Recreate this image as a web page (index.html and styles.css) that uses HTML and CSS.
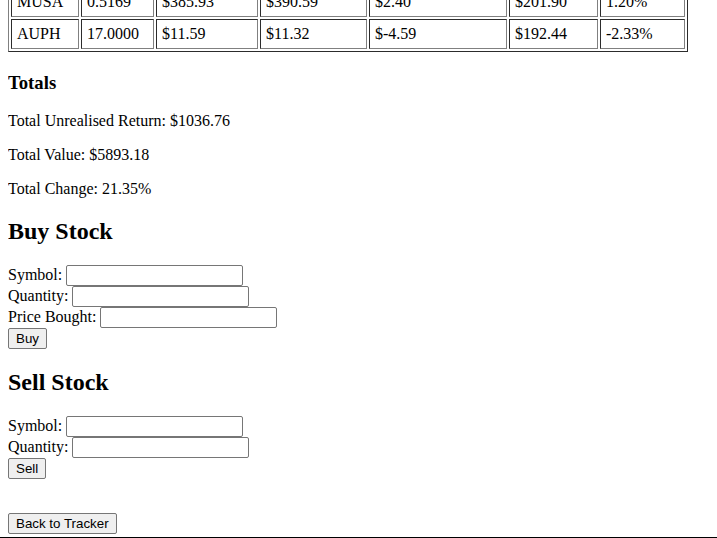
FILE: index.html
```html
<!DOCTYPE html>
<html lang="en">
<head>
<meta charset="utf-8">
<title>Portfolio - Trade</title>
<link rel="stylesheet" href="styles.css">
</head>
<body>
<table class="holdings">
  <tbody>
    <tr><td>MUSA</td><td>0.5169</td><td>$385.93</td><td>$390.59</td><td>$2.40</td><td>$201.90</td><td>1.20%</td></tr>
    <tr><td>AUPH</td><td>17.0000</td><td>$11.59</td><td>$11.32</td><td>$-4.59</td><td>$192.44</td><td>-2.33%</td></tr>
  </tbody>
</table>

<h3 class="totals-title">Totals</h3>
<p class="total">Total Unrealised Return: $1036.76</p>
<p class="total">Total Value: $5893.18</p>
<p class="total">Total Change: 21.35%</p>

<h2 class="section-title">Buy Stock</h2>
<form class="trade-form">
  <label>Symbol: <input class="field" type="text" name="symbol"></label><br>
  <label>Quantity: <input class="field" type="text" name="quantity"></label><br>
  <label>Price Bought: <input class="field" type="text" name="price"></label><br>
  <button class="btn" type="button">Buy</button>
</form>

<h2 class="section-title">Sell Stock</h2>
<form class="trade-form">
  <label>Symbol: <input class="field" type="text" name="symbol"></label><br>
  <label>Quantity: <input class="field" type="text" name="quantity"></label><br>
  <button class="btn" type="button">Sell</button>
</form>

<div class="back-row">
  <button class="btn" type="button">Back to Tracker</button>
</div>

<div class="bottom-edge"></div>
</body>
</html>
```

FILE: styles.css
```css
html {
  background: #fff;
}

body {
  margin: 0 8px 8px 8px;
  font-family: "Liberation Serif", "Times New Roman", serif;
  font-size: 16px;
  color: #000;
}

.holdings {
  margin-top: -16px;
  border: 1px outset #808080;
  border-spacing: 2px;
  border-collapse: separate;
}

.holdings td {
  box-sizing: border-box;
  border: 1px inset #808080;
  padding: 5px;
  height: 30px;
  text-align: left;
  white-space: nowrap;
}

.holdings td:nth-child(1) { width: 68px; }
.holdings td:nth-child(2) { width: 73px; }
.holdings td:nth-child(3) { width: 102px; }
.holdings td:nth-child(4) { width: 107px; }
.holdings td:nth-child(5) { width: 138px; }
.holdings td:nth-child(6) { width: 89px; }
.holdings td:nth-child(7) { width: 85px; }

.totals-title {
  font-size: 18.72px;
  margin: 19.72px 0 18.72px;
}

.total {
  margin: 16px 0;
}

.section-title {
  font-size: 24px;
  margin: 19.92px 0;
}

.trade-form {
  margin: 0;
}

.field {
  box-sizing: border-box;
  width: 177px;
  height: 21px;
  border: 1px solid #767676;
  border-radius: 2px;
  padding: 1px 2px;
  font-family: "Liberation Sans", Arial, sans-serif;
  font-size: 13.33px;
  background: #fff;
  margin: 0;
  vertical-align: baseline;
}

.btn {
  font-family: "Liberation Sans", Arial, sans-serif;
  font-size: 13.33px;
  color: #000;
  background: #efefef;
  border: 1px solid #767676;
  border-radius: 2px;
  padding: 1px 7px;
  height: 21px;
  margin: 0;
}

.back-row {
  margin-top: 34px;
}

.bottom-edge {
  position: fixed;
  left: 0;
  right: 0;
  bottom: 0;
  height: 1px;
  background: #000;
}
```
